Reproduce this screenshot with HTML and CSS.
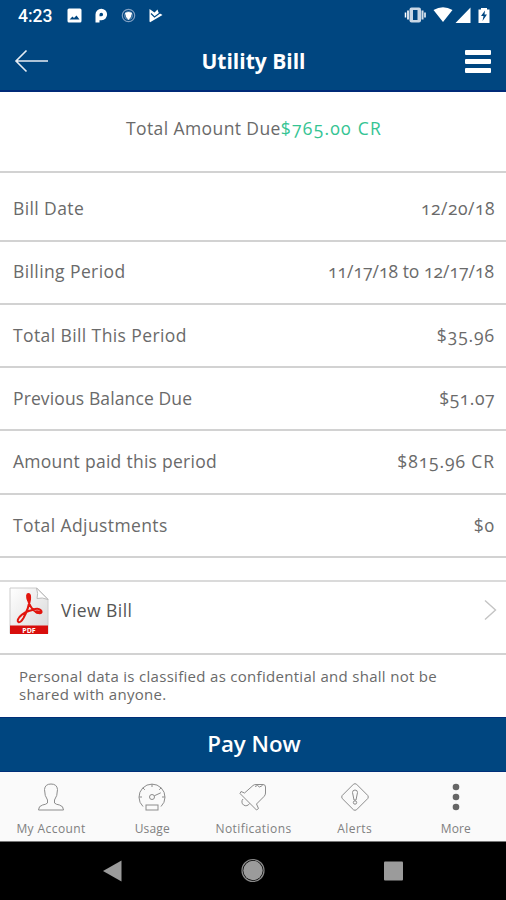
FILE: index.html
```html
<!DOCTYPE html>
<html lang="en">
<head>
    <meta charset="UTF-8">
    <title>Utility Bill</title>
    <link rel="stylesheet" href="styles.css">
</head>
<body>

<header class="top">
    <div class="status">
        <span class="clock">4:23</span>
        <svg class="notes" width="98" height="18" viewBox="66 7 98 18">
            <path fill="#fff" fill-rule="evenodd" d="M69 8.500h11q1.500 0 1.500 1.500v11q0 1.500-1.500 1.500H69q-1.500 0-1.500-1.500V10q0-1.500 1.500-1.500zM69.500 19.500h10l-3-4-2.500 2.500-1.500-1.500z"/>
            <path fill="none" stroke="#fff" stroke-width="4" d="M97.500 22.500V14.500a3.800 3.800 0 1 1 4 3.800h-2"/>
            <circle cx="128.500" cy="15.500" r="6.200" fill="none" stroke="#7f9fc2" stroke-width="1.200"/>
            <circle cx="128.500" cy="15.500" r="4" fill="none" stroke="#6e94ba"/>
            <path fill="#fff" d="M125 13q3.500-2 7 0l-1 4-2.500 3-2.500-3z"/>
            <path fill="#fff" d="M149.500 9l5 3.500 3-3 1 3 4 2.500-12 7q-1 .5-1-1z"/>
            <path fill="none" stroke="#004680" stroke-width="1.100" d="M151 13.500l3.500 3.500 6-4.500"/>
        </svg>
        <svg class="signals" width="88" height="18" viewBox="404 7 88 18">
            <path stroke="#fff" stroke-width="1.500" d="M405.500 12.500v5M425 12.500v5"/>
            <path stroke="#d5e0eb" stroke-width="2" d="M408 10.500v9M422.500 10.500v9"/>
            <rect x="409.500" y="7.500" width="11.500" height="15" rx="2" fill="#c9d7e5"/>
            <rect x="413" y="10" width="4.500" height="10" fill="#004680"/>
            <path fill="#fff" d="M433.500 10q9.500-5.500 19 0l-9.500 12zM470.500 7.500V23h-15zM478.500 9.500h2.500V8h6v1.500h2.500V23h-11z"/>
            <path fill="#004680" d="M485 10.500l-4 5.500h2.500L482.500 21l4.500-6.500h-2.500z"/>
        </svg>
    </div>
    <div class="title-bar">
        <svg width="34" height="24" viewBox="0 0 34 24">
            <path fill="none" stroke="#e6edf4" stroke-width="1.600" d="M12.500 1.500L2 12l10.500 10.500M2 12h32"/>
        </svg>
        <h1>Utility Bill</h1>
        <div class="burger"><i></i><i></i><i></i></div>
    </div>
</header>

<main>
    <div class="due"><span>Total Amount Due</span><span class="credit">$765.00 CR</span></div>
    <div class="row first"><span>Bill Date</span><b>12/20/18</b></div>
    <div class="row"><span>Billing Period</span><b class="range">11/17/18 to 12/17/18</b></div>
    <div class="row"><span>Total Bill This Period</span><b class="wide">$35.96</b></div>
    <div class="row"><span class="previous">Previous Balance Due</span><b>$51.07</b></div>
    <div class="row"><span class="paid">Amount paid this period</span><b class="wide">$815.96 CR</b></div>
    <div class="row last"><span>Total Adjustments</span><b class="wide">$0</b></div>
    <div class="view">
        <svg width="40" height="48" viewBox="0 0 40 48">
            <defs>
                <linearGradient id="sheet" x2="1" y2="1">
                    <stop offset="0" stop-color="#fff"/>
                    <stop offset="1" stop-color="#d8d8d8"/>
                </linearGradient>
            </defs>
            <path fill="url(#sheet)" stroke="#ccc" d="M1 1h27l11 11v34.500H1z"/>
            <path fill="#fff" stroke="#bbb" d="M27.500 1q2 6 .5 10.500 5-1.500 11 1z"/>
            <path fill="none" stroke="#e2150d" stroke-width="2" stroke-linejoin="round" d="M19.500 7q-2.500 0-.5 6 2 7 6 10.500 3 3 6 2.500t.5-3-8 0q-8 1.500-13 7-3 4-1 5t5-4q5-9 6.500-18.500.5-5.500-1.500-5.500z"/>
            <path stroke="#e2150d" stroke-width="3.500" stroke-linecap="round" d="M19.500 8.500v4M28 25l3 .5"/>
            <rect x="1" y="38.500" width="38" height="8.500" fill="#d80e0c"/>
            <text class="pdf" x="20" y="45.500" text-anchor="middle">PDF</text>
        </svg>
        <span>View Bill</span>
        <svg class="chevron" width="13" height="22" viewBox="0 0 13 22">
            <path fill="none" stroke="#c4c4c4" stroke-width="1.400" d="M1 1.500l10.500 9.500L1 20.500"/>
        </svg>
    </div>
    <p class="privacy">Personal data is classified as confidential and shall not be<br>shared with anyone.</p>
</main>

<div class="pay">Pay Now</div>

<nav class="tabs">
    <div class="tab">
        <svg viewBox="0 0 28 28"><path d="M7.500 6.500Q8 1 14 1t6.500 5.500Q20.500 13 17.500 17v3q1.500 1.500 5 2 4 1 4 5h-25q0-4 4-5 3.500-.5 5-2v-3Q7.500 13 7.500 6.500z"/></svg>
        <span>My Account</span>
    </div>
    <div class="tab">
        <svg viewBox="0 0 28 28"><path d="M5 23.500a13 13 0 1 1 18 0M14 1v3M1 14h3M24 14h3M4.800 4.800l2 2M23.200 4.800l-2 2M16.300 12.800l6.500-3"/><circle cx="14" cy="14" r="2.500"/><rect x="8" y="22" width="12" height="5"/></svg>
        <span class="snug">Usage</span>
    </div>
    <div class="tab">
        <svg viewBox="0 0 28 28"><path d="M2 8.500l3.500 1.500L14 2.500q1-1 3-1h7q2.500 0 2.500 2.500v6q0 2-1.500 3.500L17.500 21l2 4.500-2 1.500L1 10.500zM4 16a4 4 0 1 0 6.500 4.500"/><path d="M16 3.500l2.500-1 2 1.500 3-1.500"/></svg>
        <span>Notifications</span>
    </div>
    <div class="tab">
        <svg viewBox="0 0 28 28"><path d="M12.500 1.200q1.500-1 3 0l11.300 11.300q1 1.500 0 3L15.500 26.800q-1.500 1-3 0L1.200 15.500q-1-1.500 0-3z"/><path d="M11.500 9.500q0-2.500 2.500-2.500t2.500 2.500l-1.500 7.500h-2z"/><circle cx="14" cy="19.500" r="1.700"/></svg>
        <span>Alerts</span>
    </div>
    <div class="tab">
        <svg class="dots" viewBox="0 0 28 28"><circle cx="14" cy="4" r="3.300"/><circle cx="14" cy="14" r="3.300"/><circle cx="14" cy="24" r="3.300"/></svg>
        <span class="snug">More</span>
    </div>
</nav>

<footer class="keys">
    <svg width="506" height="58" viewBox="0 0 506 58">
        <path fill="#9b9b9b" d="M103 29l18.500-10.500v21z"/>
        <circle cx="253" cy="28.500" r="11" fill="none" stroke="#8a8a8a" stroke-width="1.200"/>
        <circle cx="253" cy="28.500" r="9.700" fill="#9b9b9b"/>
        <rect x="384" y="19.500" width="19" height="19" rx="1" fill="#9b9b9b"/>
    </svg>
</footer>

</body>
</html>
```

FILE: styles.css
```css
* {
    box-sizing: border-box;
    padding: 0; margin: 0;
}
body {
    width: 506px;
    height: 900px;
    overflow: hidden;
    background: #fff;
    color: #6a6a6a;
    font-family: "Open Sans", "Noto Sans", sans-serif;
}
svg {
    display: block;
    flex: none;
}
.top {
    height: 92px;
    background: #004680;
    border-bottom: 2px solid #002a78;
    color: #fff;
}
.status {
    display: flex;
    height: 32px;
    padding: 7px 14px 0 18px;
}
.clock {
    width: 48px;
    font: 500 17.5px/18px Roboto, sans-serif;
}
.signals {
    margin-left: auto;
}
.title-bar {
    display: flex;
    align-items: center;
    justify-content: space-between;
    height: 58px;
    padding: 0 15px 0 14px;
}
h1 {
    margin-right: 6px;
    font-size: 21px;
}
.burger {
    display: grid;
    gap: 4px;
    width: 26px;
}
.burger i {
    height: 5px;
    border-radius: 1px;
    background: #fff;
}

.due {
    display: flex;
    justify-content: center;
    height: 79px;
    padding: 23px 0 0 2px;
    font-size: 17.5px;
    line-height: 26px;
    font-feature-settings: "onum";
    letter-spacing: 0.4px;
}
.credit {
    color: #35c493;
    letter-spacing: 1.25px;
}
.row {
    display: flex;
    align-items: center;
    justify-content: space-between;
    height: 63.25px;
    padding: 0 11px 1.5px 13px;
    border-top: 2px solid #d2d2d2;
    font-size: 17.5px;
    font-feature-settings: "onum";
    letter-spacing: 0.4px;
}
.row.first {
    height: 68.5px;
    padding-top: 5px;
}
.row.last {
    height: 65.25px;
    padding-bottom: 1px;
    border-bottom: 2px solid #d2d2d2;
    margin-bottom: 22px;
}
.row b {
    font-weight: 400;
    letter-spacing: 0.5px;
}
.row .range {
    letter-spacing: 0;
    padding-right: 1px;
}
.row .wide {
    letter-spacing: 0.9px;
}
.row .previous {
    letter-spacing: 0.12px;
}
.row .paid {
    letter-spacing: 0.27px;
}
.view {
    display: flex;
    height: 73px;
    padding: 5px 9px 0;
    border-top: 2px solid #dadada;
    font-size: 17.5px;
    line-height: 46px;
    letter-spacing: 0.45px;
    color: #555;
}
.view span {
    margin-left: 12px;
}
.chevron {
    margin: 12px 0 0 auto;
}
.pdf {
    font: bold 7px "Open Sans", sans-serif;
    letter-spacing: 0;
    fill: #fff;
}
.privacy {
    height: 64px;
    padding: 12px 0 0 19px;
    border-top: 2px solid #d2d2d2;
    font-size: 15px;
    line-height: 18.5px;
    letter-spacing: 0.3px;
}
.pay {
    height: 55px;
    padding-left: 2px;
    background: #004680;
    border-top: 1px solid #002f78;
    border-bottom: 1px solid #002f78;
    color: #fff;
    font-size: 22.3px;
    font-weight: 600;
    line-height: 52px;
    text-align: center;
}

.tabs {
    display: grid;
    grid-template-columns: repeat(5, 1fr);
    height: 70px;
    background: #fafafa;
    border-bottom: 1px solid #777;
}
.tab {
    display: flex;
    flex-direction: column;
    align-items: center;
    padding: 11px 0 0 1px;
    color: #808080;
    font-size: 12px;
    line-height: 18px;
    letter-spacing: 0.42px;
}
.tab .snug {
    letter-spacing: 0.15px;
}
.tab svg {
    width: 28px;
    height: 28px;
    margin-bottom: 9px;
    fill: none;
    stroke: #8c8c8c;
}
.tab .dots {
    fill: #666;
    stroke: none;
}
.keys {
    height: 58px;
    background: #000;
}
```
